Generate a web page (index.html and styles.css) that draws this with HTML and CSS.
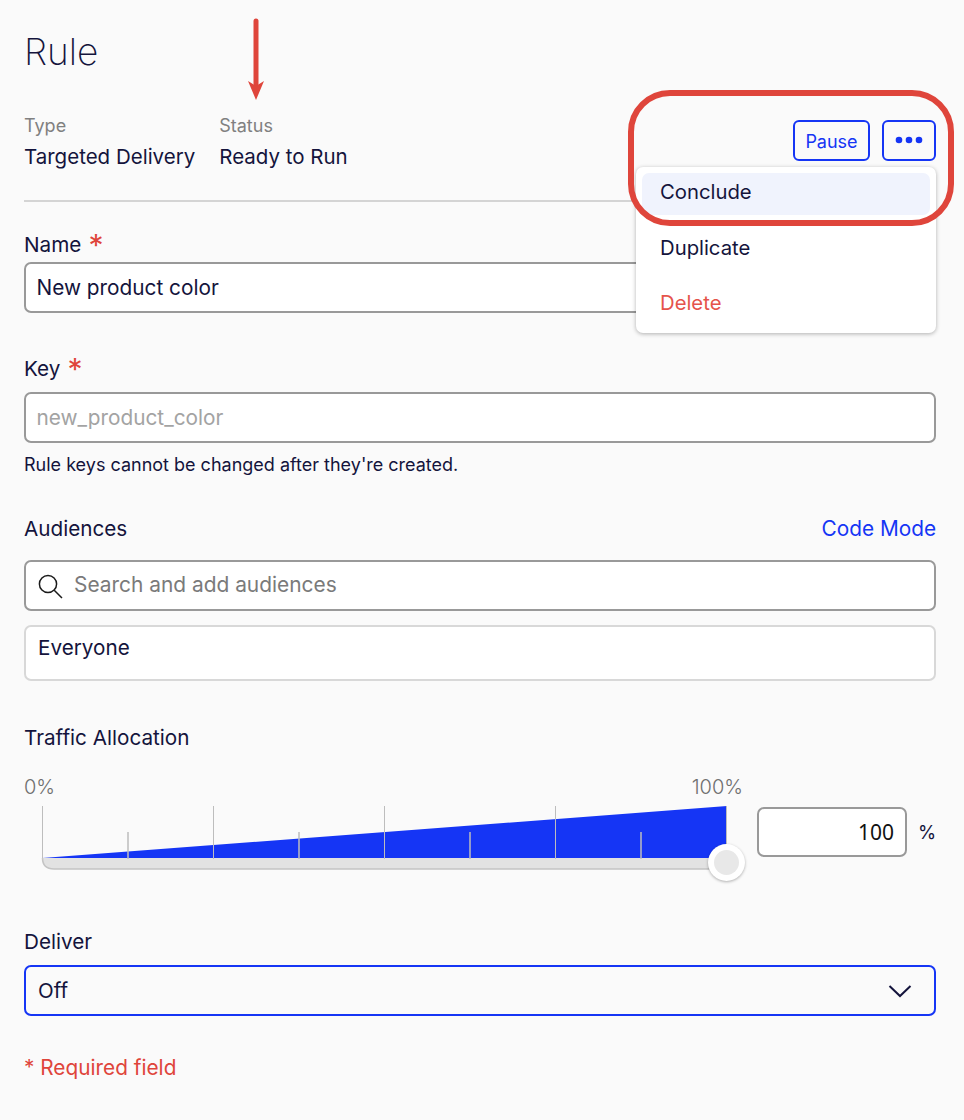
FILE: index.html
```html
<!DOCTYPE html>
<html lang="en">
<head>
<meta charset="utf-8">
<title>Rule</title>
<link rel="stylesheet" href="styles.css">
</head>
<body>
<main class="page">
  <h1 class="title">Rule</h1>
  <section class="meta">
    <div class="meta-items">
      <div class="meta-item"><div class="meta-label">Type</div><div class="meta-value">Targeted Delivery</div></div>
      <div class="meta-item"><div class="meta-label">Status</div><div class="meta-value">Ready to Run</div></div>
    </div>
    <div class="actions">
      <button class="btn btn-pause">Pause</button>
      <button class="btn btn-more" aria-label="More">
        <svg width="28" height="8" viewBox="0 0 28 8"><circle cx="4" cy="4" r="3.3"/><circle cx="14" cy="4" r="3.3"/><circle cx="24" cy="4" r="3.3"/></svg>
      </button>
    </div>
  </section>
  <hr class="divider">

  <div class="label-row label-name"><span>Name</span><span class="star">*</span></div>
  <div class="field"><span class="field-text">New product color</span></div>

  <div class="label-row label-key"><span>Key</span><span class="star">*</span></div>
  <div class="field"><span class="field-text placeholder">new_product_color</span></div>
  <p class="help">Rule keys cannot be changed after they're created.</p>

  <div class="label-row label-aud"><span>Audiences</span><a class="link">Code Mode</a></div>
  <div class="field search">
    <svg class="search-icon" width="26" height="26" viewBox="0 0 26 26" fill="none" stroke="#1a1a1a" stroke-width="1.5"><circle cx="11" cy="11" r="8.6"/><path d="M17.2 17.2 L25 25"/></svg>
    <span class="field-text muted">Search and add audiences</span>
  </div>
  <div class="everyone">Everyone</div>

  <div class="label-row label-traffic"><span>Traffic Allocation</span></div>
  <div class="traffic">
    <div class="slider">
      <div class="slider-scale"><span>0%</span><span>100%</span></div>
      <div class="slider-graph">
        <svg class="graph" width="722" height="66" viewBox="0 0 722 66">
          <path class="track" d="M18.5 52 H703 V63 H30 Q18.5 63 18.5 52 Z"/>
          <path class="track-edge" d="M18.5 52 Q18.5 63 30 63 H703"/>
          <path class="wedge" d="M18.5 52 L703 0 V52 Z"/>
          <path class="tick" d="M18.5 0 V52 M189.5 0 V53 M360.5 0 V53 M531.5 0 V53 M702.5 0 V53"/>
          <path class="tick tick-minor" d="M104 26 V53 M275 26 V53 M446 26 V53 M617 26 V53"/>
        </svg>
        <div class="thumb"><div class="thumb-core"></div></div>
      </div>
    </div>
    <div class="percent"><div class="percent-box">100</div><span class="percent-sign">%</span></div>
  </div>

  <div class="label-row label-deliver"><span>Deliver</span></div>
  <div class="field select">
    <span class="field-text select-text">Off</span>
    <svg width="24" height="14" viewBox="0 0 24 14" fill="none" stroke="#14143c" stroke-width="2"><path d="M1.500 2 L12 12 L22.500 2"/></svg>
  </div>

  <p class="required">* Required field</p>
</main>

<div class="menu">
  <div class="menu-item menu-active">Conclude</div>
  <div class="menu-item">Duplicate</div>
  <div class="menu-item menu-danger">Delete</div>
</div>
<div class="callout"></div>
<svg class="arrow" width="18" height="84" viewBox="0 0 18 84"><path d="M9 3 V68" stroke="#df453b" stroke-width="5" stroke-linecap="round"/><path d="M1 63 L9 68 L17 63 L9 82 Z" fill="#df453b"/></svg>
</body>
</html>
```
FILE: styles.css
```css
* { box-sizing: border-box; }
html, body { margin: 0; padding: 0; }
body {
  width: 964px;
  height: 1120px;
  background: #fafafa;
  color: #14143c;
  font-family: Inter, "Liberation Sans", sans-serif;
  font-size: 20px;
  position: relative;
  overflow: hidden;
}
.page { padding: 30px 28px 0 24px; display: flex; flex-direction: column; }
.title { margin: 0; font-size: 37px; line-height: 44px; font-weight: 200; }
.meta { display: flex; justify-content: space-between; align-items: flex-start; margin-top: 16px; height: 100px; }
.meta-items { display: flex; gap: 24px; padding-top: 26px; }
.meta-item { display: flex; flex-direction: column; }
.meta-label { font-size: 18px; line-height: 20px; color: #808080; height: 29px; }
.meta-value { font-size: 20.500px; line-height: 24px; }
.actions { display: flex; gap: 12px; padding-top: 30px; }
.btn { background: transparent; border: 2px solid #1535f5; border-radius: 6px; height: 41px; color: #1535f5; font-family: inherit; display: flex; align-items: center; justify-content: center; padding: 0; }
.btn-pause { width: 77px; font-size: 18px; padding-top: 1px; }
.btn-more { width: 54px; padding-bottom: 2px; }
.btn-more circle { fill: #1535f5; }
.divider { margin: 10px 0 0; border: 0; border-top: 2px solid #d4d4d4; width: 100%; }
.label-row { display: flex; justify-content: space-between; align-items: center; font-size: 20.700px; line-height: 24px; }
.label-name { justify-content: flex-start; gap: 7px; margin-top: 31px; height: 24px; margin-bottom: 5px; }
.label-key { justify-content: flex-start; gap: 7px; margin-top: 44px; height: 24px; margin-bottom: 11px; }
.star { color: #df453b; font-size: 30px; line-height: 24px; height: 24px; }
.field { height: 51px; border: 2px solid #999; border-radius: 7px; background: #fff; display: flex; align-items: center; padding: 0 10.500px; }
.field-text { font-size: 20.800px; line-height: 24px; }
.placeholder { color: #a3a3a3; }
.muted { color: #7a7a7a; font-size: 20.900px; margin-top: -1px; }
.help { margin: 11px 0 0; font-size: 18px; line-height: 22px; }
.label-aud { margin-top: 41px; height: 24px; margin-bottom: 19px; }
.link { color: #1535f5; font-size: 20.800px; }
.search { gap: 11px; padding-left: 11px; }
.search-icon { flex: none; }
.everyone { margin-top: 14px; height: 56px; border: 2px solid #d8d8d8; border-radius: 7px; background: #fff; padding: 9px 12px; font-size: 20.700px; line-height: 24px; }
.label-traffic { margin-top: 45px; height: 24px; }
.traffic { display: flex; margin-top: 25px; }
.slider { width: 722px; flex: none; }
.slider-scale { width: 719px; display: flex; justify-content: space-between; font-size: 20px; line-height: 24px; font-weight: 300; color: #6f6f6f; height: 31px; }
.slider-graph { position: relative; height: 66px; }
.graph { display: block; }
.track { fill: #e2e2e2; }
.track-edge { fill: none; stroke: #c4c4c4; stroke-width: 1.500; }
.wedge { fill: #1535f5; }
.tick { stroke: #bdbdbd; stroke-width: 1; fill: none; }
.tick-minor { stroke-width: 1.500; }
.thumb { position: absolute; left: 684px; top: 38px; width: 37px; height: 37px; border-radius: 50%; background: #fff; box-shadow: 0 1px 3px rgba(0,0,0,.3); display: flex; align-items: center; justify-content: center; }
.thumb-core { width: 25px; height: 25px; border-radius: 50%; background: #e8e8e8; }
.percent { display: flex; align-items: flex-start; margin-left: 11px; margin-top: 32px; height: 51px; gap: 11px; }
.percent-box { width: 150px; height: 50px; border: 2px solid #999; border-radius: 7px; background: #fff; text-align: right; padding: 0 11px; line-height: 46px; color: #111; font-family: "Noto Sans", sans-serif; font-size: 21px; }
.percent-sign { font-size: 18.500px; line-height: 50px; }
.label-deliver { margin-top: 58px; height: 24px; margin-bottom: 11px; }
.select { border-color: #1535f5; justify-content: space-between; background: #fafafa; padding: 0 22px 0 12px; }
.select-text { font-size: 20.500px; }
.required { margin: 40px 0 0; color: #df453b; font-size: 20.800px; line-height: 24px; }

.menu { position: absolute; left: 636px; top: 167px; width: 300px; height: 166px; background: #fff; border-radius: 7px; box-shadow: 0 1px 4px rgba(0,0,0,.3); padding: 6px; }
.menu-item { height: 55.500px; padding: 0 0 5px 18px; display: flex; align-items: center; font-size: 20.300px; border-radius: 7px; }
.menu-active { height: 42px; background: #f0f3fd; margin-bottom: 7px; }
.menu-danger { color: #e5534b; }
.callout { position: absolute; left: 628px; top: 90px; width: 326px; height: 136px; border: 6px solid #df453b; border-radius: 42px; }
.arrow { position: absolute; left: 247px; top: 18px; }
```
